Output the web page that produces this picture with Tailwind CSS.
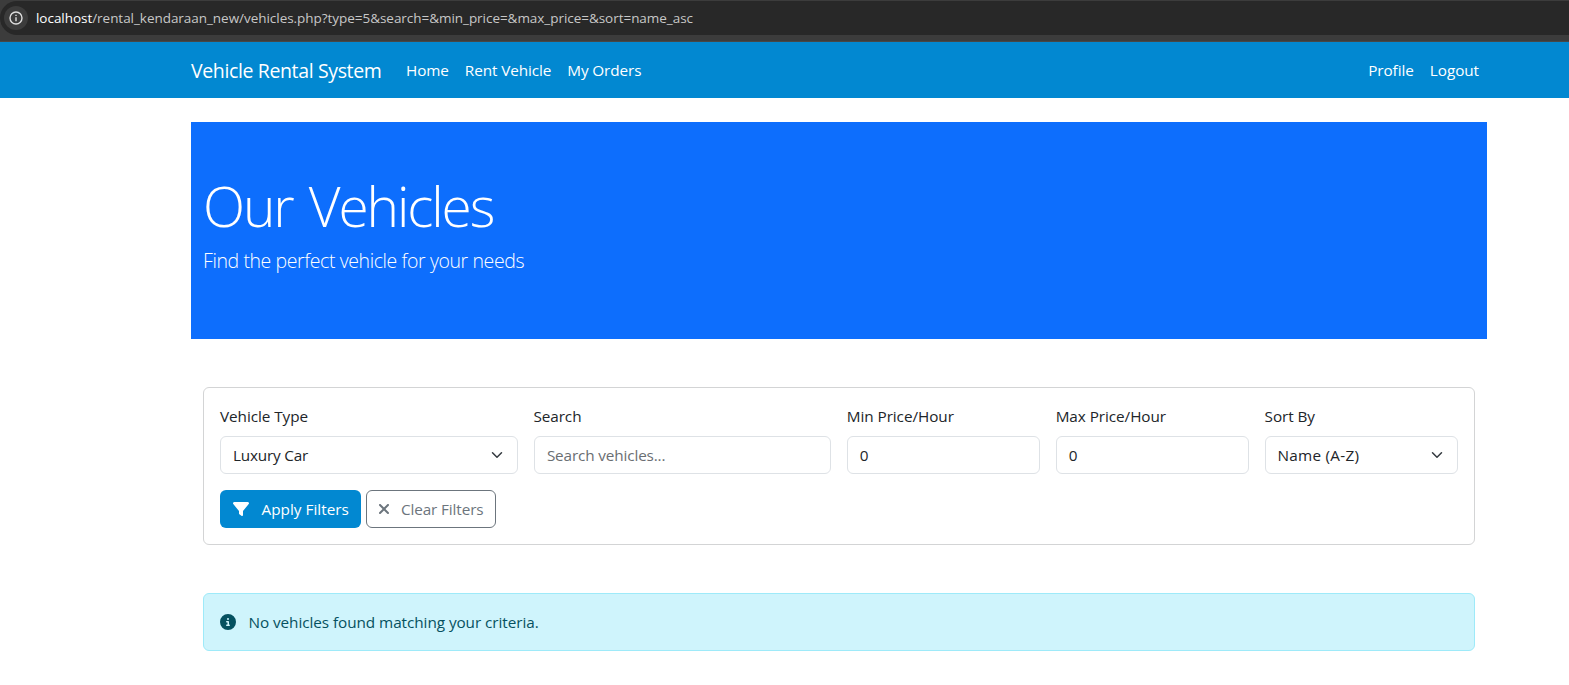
<!DOCTYPE html>
<html lang="en">
<head>
<meta charset="utf-8">
<title>Vehicle Rental System</title>
<script src="https://cdn.jsdelivr.net/npm/@tailwindcss/browser@4"></script>
</head>
<body class="bg-white text-[15.3px] leading-6 tracking-[-0.06px] text-[#212529] font-['Open_Sans','Noto_Sans',sans-serif] h-[685px] overflow-hidden">
<div class="h-[42px] bg-[#3c3c3c] pt-px border-b border-[#474747]">
  <div class="h-[34px] bg-[#282828] rounded-l-[17px] flex items-center pl-1 whitespace-nowrap">
    <div class="size-6 rounded-full bg-[#3c3c3c] flex items-center justify-center">
      <svg class="size-[14px]" viewBox="0 0 14 14" fill="none" stroke="#dedede" stroke-width="1.4"><circle cx="7" cy="7" r="6"/><path d="M7 6.2v4M7 3.700v1.400"/></svg>
    </div>
    <div class="ml-2 text-[13.5px] leading-5 tracking-[-0.04px] text-[#c7c7c7]"><span class="text-white">localhost</span>/rental_kendaraan_new/vehicles.php?type=5&amp;search=&amp;min_price=&amp;max_price=&amp;sort=name_asc</div>
  </div>
</div>
<nav class="h-14 bg-[#0288d1] text-white">
  <div class="ml-[191px] w-[1296px] h-full flex items-center pr-2 whitespace-nowrap">
    <a class="text-[19.5px] tracking-[-0.37px] w-[207px] pt-px">Vehicle Rental System</a>
    <div class="flex flex-1 gap-4 pl-2 tracking-[-0.1px]"><a>Home</a><a>Rent Vehicle</a><a>My Orders</a></div>
    <div class="flex gap-4"><a>Profile</a><a>Logout</a></div>
  </div>
</nav>
<main class="ml-[191px] w-[1295.500px] pt-6">
  <header class="h-[217px] bg-[#0d6efd] text-white px-3 pt-[50px]">
    <h1 class="text-[55px] leading-[67px] tracking-[-2.1px] [word-spacing:4px] mb-[7px] font-light whitespace-nowrap">Our Vehicles</h1>
    <p class="text-[19.5px] leading-[30px] tracking-[-0.4px] font-light">Find the perfect vehicle for your needs</p>
  </header>
  <section class="mx-3 mt-12 h-[158px] border border-[#d3d4d5] rounded-md p-4">
    <form class="grid grid-cols-12 gap-4">
      <div class="col-span-3">
        <label class="block mb-2">Vehicle Type</label>
        <div class="h-[38px] w-[298px] border border-[#dee2e6] rounded-md px-3 flex items-center justify-between tracking-[-0.2px]">Luxury Car<svg class="w-4 h-3" viewBox="0 0 16 16" fill="none" stroke="#343a40" stroke-width="2" stroke-linecap="round" stroke-linejoin="round"><path d="m2 5 6 6 6-6"/></svg></div>
      </div>
      <div class="col-span-3">
        <label class="block mb-2">Search</label>
        <div class="h-[38px] ml-[0.5px] border border-[#dee2e6] rounded-md px-3 flex items-center tracking-[-0.14px] text-[#6a6e72]">Search vehicles...</div>
      </div>
      <div class="col-span-2">
        <label class="block mb-2">Min Price/Hour</label>
        <div class="h-[38px] border border-[#dee2e6] rounded-md px-3 flex items-center">0</div>
      </div>
      <div class="col-span-2">
        <label class="block mb-2">Max Price/Hour</label>
        <div class="h-[38px] border border-[#dee2e6] rounded-md px-3 flex items-center">0</div>
      </div>
      <div class="col-span-2">
        <label class="block mb-2">Sort By</label>
        <div class="h-[38px] border border-[#dee2e6] rounded-md px-3 flex items-center justify-between tracking-[0.25px]">Name (A-Z)<svg class="w-4 h-3" viewBox="0 0 16 16" fill="none" stroke="#343a40" stroke-width="2" stroke-linecap="round" stroke-linejoin="round"><path d="m2 5 6 6 6-6"/></svg></div>
      </div>
      <div class="col-span-12 flex gap-[5px]">
        <div class="w-[141px] h-[38px] rounded-md bg-[#0288d1] text-white flex items-center pl-[13px] tracking-[0.02px]"><svg class="size-4 mr-[12.500px]" viewBox="0 0 512 512" fill="currentColor"><path d="M3.900 54.900C10.500 40.900 24.500 32 40 32H472c15.500 0 29.500 8.900 36.100 22.900s4.600 30.500-5.200 42.500L320 320.900V448c0 12.100-6.800 23.200-17.700 28.600s-23.800 4.300-33.500-3l-64-48c-8.100-6-12.800-15.500-12.800-25.600V320.900L9 97.300C-.7 85.400-2.800 68.800 3.900 54.900z"/></svg>Apply Filters</div>
        <div class="w-[130px] h-[38px] rounded-md border border-[#6c757d] text-[#6c757d] flex items-center pl-[10.500px] tracking-[-0.12px]"><svg class="w-3 h-4 mr-[11.500px]" viewBox="0 0 384 512" fill="currentColor"><path d="M342.600 150.600c12.500-12.500 12.500-32.800 0-45.300s-32.800-12.500-45.300 0L192 210.700 86.600 105.400c-12.500-12.500-32.800-12.500-45.300 0s-12.500 32.800 0 45.300L146.700 256 41.400 361.400c-12.500 12.500-12.500 32.800 0 45.300s32.800 12.500 45.300 0L192 301.300 297.400 406.600c12.500 12.500 32.800 12.500 45.300 0s12.500-32.800 0-45.300L237.300 256 342.600 150.600z"/></svg>Clear Filters</div>
      </div>
    </form>
  </section>
  <div class="mx-3 mt-12 h-[58px] border border-[#9eeaf9] bg-[#cff4fc] text-[#055160] rounded-md px-4 flex items-center"><svg class="size-4 mr-[12.500px]" viewBox="0 0 512 512" fill="currentColor"><path d="M256 512A256 256 0 1 0 256 0a256 256 0 1 0 0 512zM216 336h24V272H216c-13.300 0-24-10.700-24-24s10.700-24 24-24h48c13.300 0 24 10.700 24 24v88h8c13.300 0 24 10.700 24 24s-10.700 24-24 24H216c-13.300 0-24-10.700-24-24s10.700-24 24-24zm40-208a32 32 0 1 1 0 64 32 32 0 1 1 0-64z"/></svg>No vehicles found matching your criteria.</div>
</main>
</body>
</html>
